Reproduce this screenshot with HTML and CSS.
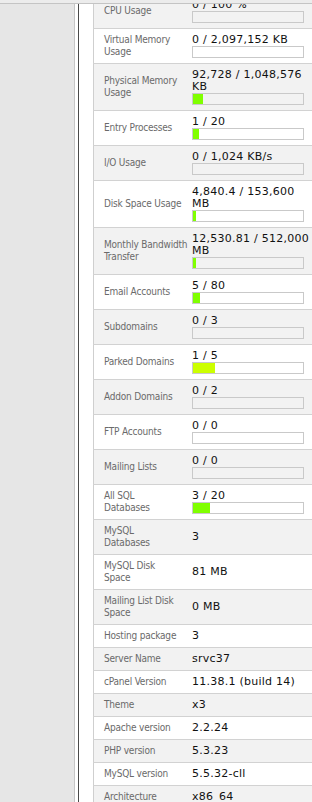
FILE: index.html
```html
<!DOCTYPE html>
<html lang="en">
<head>
	<meta charset="UTF-8">
	<meta name="viewport" content="width=device-width, initial-scale=1.0">
	<title>Stats</title>
	<link rel="stylesheet" href="styles.css">
</head>
<body>
	<div class="topbar"></div>
	<div class="layout">
		<div class="sidebar"></div>
		<div class="main">
			<table class="stats">
				<tr class="odd">
					<td class="label">CPU Usage</td>
					<td class="value">0 / 100 %<div class="bar"><div class="fill" style="width: 0%"></div></div></td>
				</tr>
				<tr>
					<td class="label">Virtual Memory<br>Usage</td>
					<td class="value">0 / 2,097,152 KB<div class="bar"><div class="fill" style="width: 0%"></div></div></td>
				</tr>
				<tr class="odd">
					<td class="label">Physical Memory<br>Usage</td>
					<td class="value">92,728 / 1,048,576<br>KB<div class="bar"><div class="fill" style="width: 8.84%"></div></div></td>
				</tr>
				<tr>
					<td class="label">Entry Processes</td>
					<td class="value">1 / 20<div class="bar"><div class="fill" style="width: 5%"></div></div></td>
				</tr>
				<tr class="odd">
					<td class="label">I/O Usage</td>
					<td class="value">0 / 1,024 KB/s<div class="bar"><div class="fill" style="width: 0%"></div></div></td>
				</tr>
				<tr>
					<td class="label">Disk Space Usage</td>
					<td class="value">4,840.4 / 153,600<br>MB<div class="bar"><div class="fill" style="width: 3.15%"></div></div></td>
				</tr>
				<tr class="odd">
					<td class="label">Monthly Bandwidth<br>Transfer</td>
					<td class="value">12,530.81 / 512,000<br>MB<div class="bar"><div class="fill" style="width: 2.45%"></div></div></td>
				</tr>
				<tr>
					<td class="label">Email Accounts</td>
					<td class="value">5 / 80<div class="bar"><div class="fill" style="width: 6.25%"></div></div></td>
				</tr>
				<tr class="odd">
					<td class="label">Subdomains</td>
					<td class="value">0 / 3<div class="bar"><div class="fill" style="width: 0%"></div></div></td>
				</tr>
				<tr>
					<td class="label">Parked Domains</td>
					<td class="value">1 / 5<div class="bar"><div class="fill warn" style="width: 20%"></div></div></td>
				</tr>
				<tr class="odd">
					<td class="label">Addon Domains</td>
					<td class="value">0 / 2<div class="bar"><div class="fill" style="width: 0%"></div></div></td>
				</tr>
				<tr>
					<td class="label">FTP Accounts</td>
					<td class="value">0 / 0<div class="bar"><div class="fill" style="width: 0%"></div></div></td>
				</tr>
				<tr class="odd">
					<td class="label">Mailing Lists</td>
					<td class="value">0 / 0<div class="bar"><div class="fill" style="width: 0%"></div></div></td>
				</tr>
				<tr>
					<td class="label">All SQL<br>Databases</td>
					<td class="value">3 / 20<div class="bar"><div class="fill" style="width: 15%"></div></div></td>
				</tr>
				<tr class="odd">
					<td class="label">MySQL<br>Databases</td>
					<td class="value">3</td>
				</tr>
				<tr>
					<td class="label">MySQL Disk<br>Space</td>
					<td class="value">81 MB</td>
				</tr>
				<tr class="odd">
					<td class="label">Mailing List Disk<br>Space</td>
					<td class="value">0 MB</td>
				</tr>
				<tr>
					<td class="label">Hosting package</td>
					<td class="value">3</td>
				</tr>
				<tr class="odd">
					<td class="label">Server Name</td>
					<td class="value">srvc37</td>
				</tr>
				<tr>
					<td class="label">cPanel Version</td>
					<td class="value">11.38.1 (build 14)</td>
				</tr>
				<tr class="odd">
					<td class="label">Theme</td>
					<td class="value">x3</td>
				</tr>
				<tr>
					<td class="label">Apache version</td>
					<td class="value">2.2.24</td>
				</tr>
				<tr class="odd">
					<td class="label">PHP version</td>
					<td class="value">5.3.23</td>
				</tr>
				<tr>
					<td class="label">MySQL version</td>
					<td class="value">5.5.32-cll</td>
				</tr>
				<tr class="odd">
					<td class="label">Architecture</td>
					<td class="value">x86_64</td>
				</tr>
			</table>
		</div>
	</div>
</body>
</html>
```

FILE: styles.css
```css
html, body {
	margin: 0;
	padding: 0;
	height: 100%;
}

body {
	background: #fff;
	overflow: hidden;
	display: flex;
	flex-direction: column;
}

.topbar {
	height: 3px;
	flex-shrink: 0;
	background: #ececec;
	border-bottom: 1px solid #c4c4c4;
}

.layout {
	flex: 1;
	display: flex;
	min-height: 0;
}

.sidebar {
	width: 74px;
	flex-shrink: 0;
	background: #e6e6e6;
	border-right: 1px solid #c6c6c6;
}

.main {
	flex: 1;
	min-width: 0;
	overflow: hidden;
	margin-left: 3px;
	padding-left: 14px;
	border-left: 1px solid #4a4a4a;
}

.stats {
	width: 240px;
	margin-top: -10px;
	border-collapse: collapse;
	border-left: 1px solid #cfcfcf;
}

.stats tr {
	background: #fff;
	border-bottom: 1px solid #d2d2d2;
}
.stats tr.odd {
	background: #f2f2f2;
}

.stats td {
	padding: 5px 0;
	vertical-align: middle;
	white-space: nowrap;
}

.label {
	width: 88px;
	padding-left: 10px !important;
	font-family: "DejaVu Sans", Tahoma, sans-serif;
	font-stretch: condensed;
	font-size: 10px;
	line-height: 12px;
	letter-spacing: -0.2px;
	color: #6a6a6a;
}

.value {
	font-family: "DejaVu Sans", Verdana, sans-serif;
	font-size: 11px;
	line-height: 12px;
	letter-spacing: 0.25px;
	color: #111;
}

.bar {
	width: 110px;
	height: 10px;
	border: 1px solid #c9c9c9;
}

.fill {
	height: 100%;
	background: #80ff00;
}
.fill.warn {
	background: #ccff00;
}
```
